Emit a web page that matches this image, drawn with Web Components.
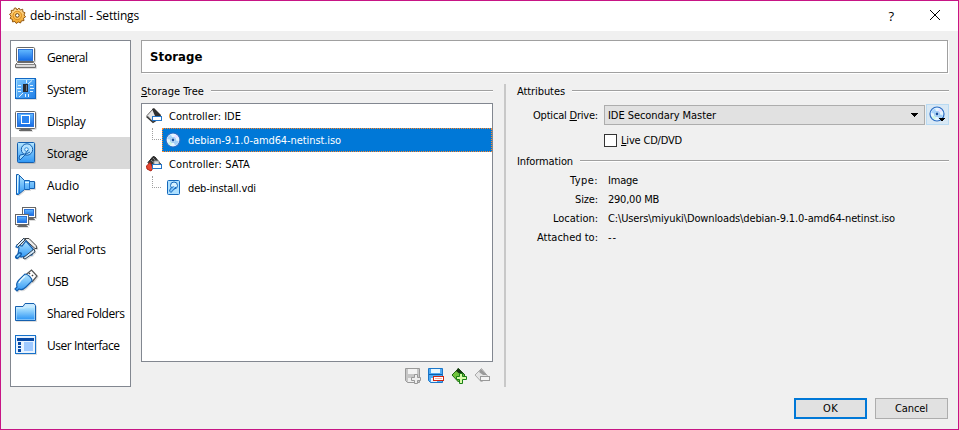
<!DOCTYPE html>
<html lang="en">
<head>
<meta charset="utf-8">
<title>deb-install - Settings</title>
<style>
html,body{margin:0;height:100%;overflow:hidden;background:#f0f0f0}
body{font:11px/14px "DejaVu Sans Condensed","DejaVu Sans",sans-serif;color:#000}
</style>
</head>
<body>
<settings-window></settings-window>
<script>
const gradient = `<defs>
<linearGradient id="b" x1="0" y1="0" x2="0" y2="1"><stop offset="0" stop-color="#64baff"/><stop offset="1" stop-color="#146be6"/></linearGradient>
<linearGradient id="s" x1="0" y1="0" x2="0" y2="1"><stop offset="0" stop-color="#b4e6ff"/><stop offset="1" stop-color="#2f97f5"/></linearGradient>
<linearGradient id="h" x1="0" y1="0" x2="1" y2="1"><stop offset="0" stop-color="#7cc8ff"/><stop offset="1" stop-color="#2080e8"/></linearGradient>
<linearGradient id="g" x1="0" y1="0" x2="0" y2="1"><stop offset="0" stop-color="#ffe0a0"/><stop offset="1" stop-color="#f0a020"/></linearGradient>
<linearGradient id="w" x1="0" y1="0" x2="0" y2="1"><stop offset="0" stop-color="#fff"/><stop offset="1" stop-color="#c8c8c8"/></linearGradient></defs>`;
const disc = `<circle cx="8" cy="8" r="7" fill="#e6f5ff" stroke="#2a6cc4" stroke-width="1.2"/><path d="M8 8 2.2 7A6 6 0 0 1 6 2.4Z" fill="#a9d4fa"/><path d="M8 8 13.8 9A6 6 0 0 1 10 13.6Z" fill="#a4d0f8"/><path d="M8 8 10 2.4A6 6 0 0 1 13.2 5Z" fill="#eadfff"/><path d="M8 8 6 13.6A6 6 0 0 1 2.8 11Z" fill="#cdf6e2"/><circle cx="8" cy="8" r="2.7" fill="#d3ecff" stroke="#7db8ee" stroke-width=".6"/><circle cx="8" cy="8" r="1.4" fill="#174f9e"/>`;
const icons = {
general:`<rect x="3.5" y="2.5" width="18" height="14" rx="1" fill="#fff" stroke="#666"/><rect x="5.5" y="4.5" width="14" height="11" fill="url(#b)" stroke="#2e74d8"/><path d="M4.5 17.5h16l2 2v3h-20v-3Z" fill="url(#w)" stroke="#6c6c6c"/><path d="M3 19.5h19" stroke="#888"/>`,
system:`<g transform="translate(0 -1)"><rect x="2.5" y="2.5" width="20" height="20" fill="url(#h)" stroke="#1268c4"/><path d="M3.5 21V3.5H21" fill="none" stroke="#a5dcff"/><path d="M5 9.5h3M4 12.5h4M5 15.5h3M17 9.5h3M17 12.5h4M17 15.5h3M13.5 4v3M15 8l4-3.5M10 17l-4 4M12.5 18v3M15.5 18v3" stroke="#dff4ff"/><rect x="10" y="8" width="5" height="8" fill="#262b32"/><path d="M13.5 9v6" stroke="#717b86"/></g>`,
display:`<rect x="2.5" y="2.5" width="20" height="17" rx="1" fill="#fff" stroke="#666"/><rect x="4.5" y="4.5" width="16" height="13" fill="url(#b)" stroke="#2e74d8"/><rect x="8.5" y="6.5" width="8" height="8" fill="#2a83f0" stroke="#fff"/><path d="M7.5 20.5h10l1.5 1h-13Z" fill="#fff" stroke="#666"/>`,
storage:`<g transform="translate(0 -1)"><rect x="4.5" y="2.5" width="17" height="20" rx="1" fill="url(#s)" stroke="#155fae"/><circle cx="14" cy="9.5" r="5.7" fill="#b3e1ff" stroke="#155fae"/><circle cx="13.5" cy="9.5" r="1.8" fill="#e9f9ff" stroke="#318ddb"/><path d="m17 12-4 2-6 6-1-2 1-3 5-1 3-4" fill="#9bdaff" stroke="#155fae"/></g>`,
audio:`<g transform="translate(0 -1)"><path d="M3.5 2.5h2l6 6h5v1h5v7h-5v1h-5l-6 5h-2Z" fill="url(#s)" stroke="#155fae"/><path d="M6.5 4v17M11.5 8v9M16.5 9v9" stroke="#1e73cc"/><path d="M4.5 4v17M12 10.5h4" stroke="#e0f6ff"/></g>`,
network:`<g id="m"><rect x="9.5" y="2.5" width="13" height="10" fill="#fff" stroke="#666"/><rect x="11.5" y="4.5" width="9" height="6" fill="url(#b)" stroke="#2e74d8"/><path d="M12.5 13.5h8l1 1h-10Z" fill="#ddd" stroke="#666"/></g><use href="#m" x="-7" y="7"/>`,
serial:`<g transform="translate(0 -2)"><path d="M12 3.5h4l7 7 1 3h-2l-9-8Z" fill="#eee" stroke="#444"/><path d="m13 6 7 8-1 6-6 1-5 1-3-3 1-6-3-1 1-2 5 1Z" fill="url(#s)" stroke="#155fae" stroke-width="1.2"/><path d="M4 10 11 3l1 2-7 7M10 23l11-9 1 3-10 7Z" fill="#d6eafa" stroke="#345"/><path d="m4 22 3-3" stroke="#155fae" stroke-width="4" stroke-linecap="round"/><path d="m4 22 3-3" stroke="#7fd0ff" stroke-width="1.5"/></g>`,
usb:`<g transform="translate(0 -1)"><path d="m12.5 7 6-5 5.5 6-5 6" fill="#fff" stroke="#555" stroke-width="1.2"/><path d="m16 5 1 1M19 7l1 1" stroke="#444" stroke-width="1.6"/><path d="M12 6c3 0 7 4 7 7l-6 6c-2 2-5 3-7 2l-2 2-2-2 2-2c-1-3 0-5 2-7Z" fill="url(#s)" stroke="#155fae" stroke-width="1.2"/><path d="M6 15c1-3 4-5 6-7" fill="none" stroke="#e7f9ff" stroke-width="1.5"/></g>`,
folder:`<path d="M2.5 19.5V5.5H10l2-3h9l1.5 2v15Z" fill="#c8eaff" stroke="#155fae"/><path d="M3.5 7.5h8l2-1h8V18.5h-18Z" fill="url(#s)"/>`,
ui:`<rect x="2.5" y="2.5" width="20" height="18" fill="#e8f3ff" stroke="#1671ca"/><rect x="4" y="5" width="17" height="3" fill="#0849a5"/><path d="M5 9h3v3H5ZM5 13h3v2H5ZM5 16h3v3H5Z" fill="#0849a5"/><rect x="11" y="9" width="9" height="9" fill="#9fc9ff"/>`,
gear:`<path d="m7 1 1 2 2-2 1.2 2 2.5-.8.1 2.5 2.2 1-1 2.3 1.6 1.8-2.1 1.4.5 2.4-2.5.2-1 2.2-2.2-1-2 1.5-1.4-2-2.4.4-.2-2.5-2.2-1 1-2.2L.5 7.3l2-1.5-.4-2.4 2.5-.1.8-2.2Z" fill="url(#g)" stroke="#8a4d05" stroke-width=".9"/><circle cx="8.3" cy="8.4" r="4.2" fill="#ffc35b" stroke="#d78a19"/><circle cx="8.3" cy="8.4" r="1.8" fill="#fff" stroke="#65420f"/>`,
disc,
hdd:`<rect x="2.5" y=".5" width="12" height="14" rx="1" fill="#aee0ff" stroke="#1468bc"/><circle cx="9" cy="5.5" r="3.5" fill="#d6f1ff" stroke="#1468bc"/><path d="m11 7-5 5.5-1.5-1.5 1-2.5 3-2" fill="#7fc3fa" stroke="#1468bc"/>`,
ide:`<path d="M7 1 1 7.5l6 6.5 4-4 4-2Z" fill="#e6e6e6" stroke="#666"/><path d="m6 1 2-1 7 7-1 1.5-5-.5Z" fill="#303030"/><path d="m.5 8.5 6.5 6 3-2" fill="none" stroke="#333" stroke-width="1.3"/><rect x="6.5" y="8.5" width="9" height="4" fill="#fff" stroke="#2575c8"/>`,
sata:`<path d="M7 .5 2 6.5l5 6 4-4h4l-6-7.5Z" fill="#373737" stroke="#222"/><path d="m5 4 5 5M7 2l5 5" stroke="#aaa" stroke-dasharray="1 1"/><path d="M.5 10 4 6.5l3 5.5-2 3-4-2Z" fill="#e74732" stroke="#ac2115"/><path d="M8 8V5h5v3" fill="#ddd" stroke="#999"/><rect x="6.5" y="8.5" width="9" height="4" fill="#fff" stroke="#2575c8"/>`,
diskadd:`<path d="M.5.5h14v14H2.5l-2-2Z" fill="#c6c6c6" stroke="#999"/><path d="M3 1h9v5H3Z" fill="#f3f3f3"/><path d="M3 10h6v4H3Z" fill="#eee"/><path d="M9.5 6.5h3v3h3v3h-3v3h-3v-3h-3v-3h3Z" fill="#eee" stroke="#999"/>`,
diskdel:`<path d="M.5.5h14v14H2.5l-2-2Z" fill="#4da9f4" stroke="#1c76c8"/><path d="M3 1h9v4H3Z" fill="#e9f7ff"/><path d="M1 6.5h13" stroke="#095dac"/><path d="M3 10h6v4H3Z" fill="#e7f5ff"/><rect x="5.5" y="8.5" width="10" height="4" fill="#fff" stroke="#ce2613"/><path d="M7 10.5h7" stroke="#fbb0a4"/>`,
add:`<path d="M7.5.5 1 7l6.5 7L14 7Z" fill="#70c43d" stroke="#206912"/><path d="m7 0 6 6-3 1-5-4Z" fill="#173712"/><path d="M8.5 5.5h3v3h4v3h-4v4h-3v-4h-3v-3h3Z" fill="#d8fba8" stroke="#198116"/>`,
remove:`<path d="M7.5.5 1 7l6.5 7 6-6Z" fill="#e4e4e4" stroke="#aaa"/><path d="m7 1 6 6H9L5 4Z" fill="#999"/><rect x="6.5" y="8.5" width="9" height="4" fill="#f3f3f3" stroke="#999"/>`,
discmenu:disc+`<path d="M10 12h6v1h-1v1h-1v1h-2v-1h-1v-1h-1Z"/>`,
close:`<path d="m3 3 10 10m0-10-10 10" stroke="#000"/>`,
arrow:`<path d="M4 6h7v1h-1v1H9v1H8v1H7V9H6V8H5V7H4Z"/>`
};
const make = (name, html, setup) => customElements.define(name, class extends HTMLElement {
  constructor(){ super(); this.attachShadow({mode:"open"}); }
  connectedCallback(){ this.shadowRoot.innerHTML = typeof html === "function" ? html(this) : html; if(setup) setup(this); }
});

make("settings-window", `<style>
:host{display:flex;flex-direction:column;width:959px;height:430px;box-sizing:border-box;border:1px solid #c71585;background:#f0f0f0}
main{display:grid;grid-template-columns:121px 808px;column-gap:10px;padding:9px 9px 0}
section{display:grid;grid-template-rows:33px 302px;row-gap:12px}
page-heading{width:807px}
.panes{display:grid;grid-template-columns:352px 2px 432px;column-gap:11px}
.rule{background:#c8c8c8;margin-top:-1px}
footer{display:flex;justify-content:flex-end;gap:8px;padding:11px 10px 0}
</style>
<title-bar></title-bar>
<main><category-list></category-list><section><page-heading></page-heading>
<div class="panes"><storage-tree></storage-tree><div class="rule"></div><detail-pane></detail-pane></div></section></main>
<footer><push-button default><fit-text w="15">OK</fit-text></push-button><push-button><fit-text w="33">Cancel</fit-text></push-button></footer>`);

make("title-bar", `<style>
:host{display:flex;align-items:center;height:30px;background:#fff;padding:0 15px 0 8px;font:12px/16px "Open Sans",sans-serif}
ui-icon{margin-top:-2px}
.name{margin-left:5px;flex:1}.help{margin-right:33px;font-size:13px}
</style><ui-icon name="gear" size="16"></ui-icon><span class="name"><fit-text w="109">deb-install - Settings</fit-text></span><span class="help">?</span><ui-icon name="close" size="16"></ui-icon>`);

make("category-list", `<style>:host{display:block;background:#fff;border:1px solid #828790;box-sizing:border-box;height:347px}</style>`+
[["general","General",40.5],["system","System",38.5],["display","Display",38.5],["storage","Storage",40.5],["audio","Audio",32],["network","Network",45.5],["serial","Serial Ports",58.5],["usb","USB",21],["folder","Shared Folders",77.5],["ui","User Interface",72.5]].map(([i,t,w])=>`<category-item ${i==="storage"?"selected":""}><ui-icon slot="icon" name="${i}" size="25"></ui-icon><fit-text w="${w}">${t}</fit-text></category-item>`).join(""));

make("category-item", `<style>:host{display:flex;align-items:flex-start;height:32px;box-sizing:border-box;padding:4px 0 0 2px;font:12px/16px "Open Sans",sans-serif}:host([selected]){background:#d9d9d9}.label{margin:5px 0 0 9px}</style><slot name="icon"></slot><span class="label"><slot></slot></span>`);

make("page-heading", `<style>:host{display:flex;align-items:center;box-sizing:border-box;background:#fff;border:1px solid #a0a0a0;box-shadow:1px 1px #fff;padding:1px 8px 0;font:bold 13px/18px "DejaVu Sans Condensed","DejaVu Sans",sans-serif}</style><fit-text w="52.5">Storage</fit-text>`);

make("group-title", `<style>:host{display:flex;height:14px}.line{flex:1;height:1px;margin:5px 0 0 7px;background:#a0a0a0;box-shadow:0 1px #fff}</style><slot></slot><span class="line"></span>`);

make("storage-tree", `<style>
:host{display:grid;grid-template-rows:14px 258px 17px;row-gap:5px}
.box{background:#fff;border:1px solid #828790;margin-top:-1px;box-sizing:border-box}
.tools{display:flex;justify-content:flex-end;gap:7px;padding:1px 3px 0 0}
</style><group-title><fit-text w="63"><u>S</u>torage Tree</fit-text></group-title>
<div class="box">
<tree-row><ui-icon name="ide" size="16"></ui-icon><fit-text slot="label" w="72">Controller: IDE</fit-text></tree-row>
<tree-row child selected><ui-icon name="disc" size="16"></ui-icon><fit-text slot="label" w="153">debian-9.1.0-amd64-netinst.iso</fit-text></tree-row>
<tree-row><ui-icon name="sata" size="16"></ui-icon><fit-text slot="label" w="81">Controller: SATA</fit-text></tree-row>
<tree-row child><ui-icon name="hdd" size="16"></ui-icon><fit-text slot="label" w="68">deb-install.vdi</fit-text></tree-row>
</div><div class="tools"><ui-icon name="diskadd" size="16"></ui-icon><ui-icon name="diskdel" size="16"></ui-icon><ui-icon name="add" size="16"></ui-icon><ui-icon name="remove" size="16"></ui-icon></div>`);

make("tree-row", `<style>
:host{display:flex;height:24px}
.branch{display:none;width:9px;height:12px;margin:0 1px 0 10px;border:dotted #a0a0a0;border-width:0 0 1px 1px;box-sizing:border-box}
.content{flex:1;display:flex;align-items:center;gap:7px;padding-left:4px;box-sizing:border-box}
:host([child]) .branch{display:block}
:host([selected]) .content{background:#0078d7;color:#fff;outline:1px dotted #ff8728;outline-offset:-1px}
:host([child]) .content{padding-left:3px}
::slotted(fit-text){padding-top:2px}
</style><span class="branch"></span><div class="content"><slot></slot><slot name="label"></slot></div>`);

make("detail-pane", `<style>
:host{display:block}
.row,.live{display:grid;align-items:center}
.drive{display:grid;align-items:center;grid-template-columns:81px 327px 24px;margin-top:5px;height:22px}
.label{justify-self:end;white-space:nowrap}
.drive .label{padding-top:2px}
combo-box{margin-left:6px}
.live{grid-template-columns:13px 1fr;column-gap:4px;margin:7px 0 0 87px;height:14px}
.live fit-text{padding-top:1px}
.check{width:13px;height:13px;border:1px solid #333;background:#fff;box-sizing:border-box}
.info{margin-top:8px}.row{grid-template-columns:81px 1fr;height:19px;column-gap:10px}.rows{margin-top:2px}
</style>
<group-title><fit-text w="48">Attributes</fit-text></group-title>
<div class="drive"><span class="label"><fit-text w="65">Optical <u>D</u>rive:</fit-text></span><combo-box><fit-text w="108">IDE Secondary Master</fit-text></combo-box><disc-button></disc-button></div>
<div class="live"><span class="check"></span><fit-text w="61"><u>L</u>ive CD/DVD</fit-text></div>
<group-title class="info"><fit-text w="56">Information</fit-text></group-title>
<div class="rows">`+[["Type:",28,"Image",30],["Size:",23,"290,00 MB",51],["Location:",45,"C:\\Users\\miyuki\\Downloads\\debian-9.1.0-amd64-netinst.iso",287],["Attached to:",61,"--",9]].map(([a,b,c,d])=>`<div class="row"><span class="label"><fit-text w="${b}">${a}</fit-text></span><fit-text w="${d}">${c}</fit-text></div>`).join("")+`</div>`);

make("combo-box", `<style>:host{display:flex;align-items:center;justify-content:space-between;height:20px;border:1px solid #adadad;background:#e1e1e1;box-sizing:border-box;padding:0 1px 0 3px}::slotted(fit-text){padding-top:2px}</style><slot></slot><ui-icon name="arrow" size="16"></ui-icon>`);
make("disc-button", `<style>:host{display:flex;align-items:center;justify-content:center;height:21px;width:23px;margin:-1px 0 0 1px;border:1px solid #b9daf2;background:#d9e8f4;box-sizing:border-box}</style><ui-icon name="discmenu" size="17"></ui-icon>`);
make("push-button", `<style>:host{display:flex;align-items:center;justify-content:center;width:73px;height:21px;border:1px solid #adadad;background:#e1e1e1;box-sizing:border-box}:host([default]){border:2px solid #0078d7}::slotted(fit-text){padding-top:1px}</style><slot></slot>`);

make("ui-icon", el=>{const n=el.getAttribute("name"),s=el.getAttribute("size");return `<style>:host{display:block;flex:none;width:${s}px;height:${s}px}svg{display:block;overflow:visible;filter:${s==="25"?"drop-shadow(1px 1px 0 #0002)":"none"}}</style><svg width="${s}" height="${s}" viewBox="0 0 ${s} ${s}">${gradient}${icons[n]}</svg>`});

// Tracks its label to the advance width given in "w".
make("fit-text", `<style>:host{display:inline-block;white-space:nowrap;flex:none;justify-self:start}::slotted(u){text-underline-offset:1px;text-decoration-thickness:1px;text-decoration-skip-ink:none}</style><slot></slot>`, el=>{
  const w=+el.getAttribute("w"), natural=el.getBoundingClientRect().width;
  el.style.letterSpacing=((w-natural)/el.textContent.length)+"px";
  el.style.width=w+"px";
});
</script>
</body>
</html>
